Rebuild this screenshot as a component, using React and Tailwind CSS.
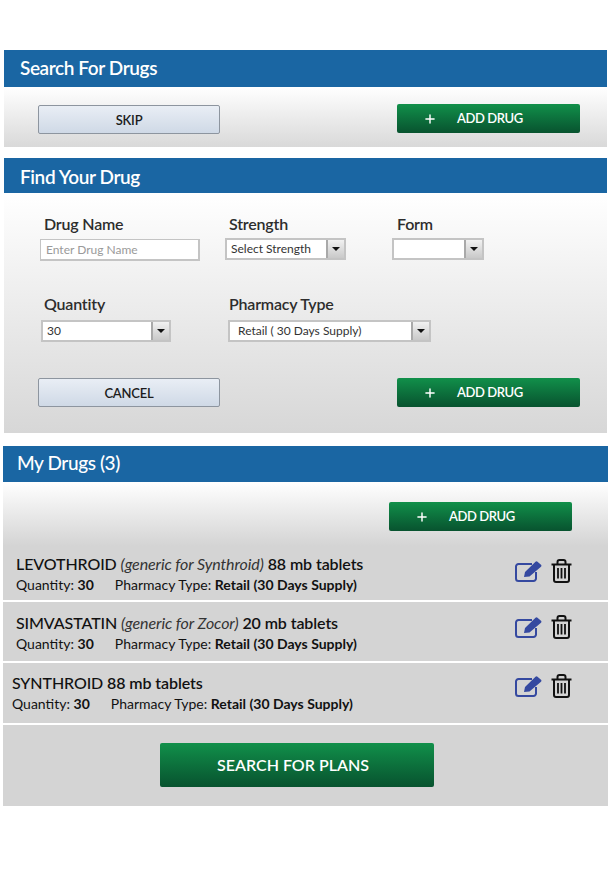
import { Plus } from "lucide-react";

const drugs = [
  { name: "LEVOTHROID", generic: "(generic for Synthroid)", dose: "88 mb tablets", pad: "pl-[13px]", height: "h-[54px]", top: "pt-[8px]", iconTop: "pt-[13px]" },
  { name: "SIMVASTATIN", generic: "(generic for Zocor)", dose: "20 mb tablets", pad: "pl-[13px]", height: "h-[59px]", top: "pt-[11px]", iconTop: "pt-[13px]" },
  { name: "SYNTHROID", generic: "", dose: "88 mb tablets", pad: "pl-[9px]", height: "h-[60px]", top: "pt-[10px]", iconTop: "pt-[11px]" },
];

const Header = ({ title, className }) => (
  <div className={`bg-[#1a66a3] flex items-center text-white text-[19px] tracking-[-0.4px] ${className}`}>{title}</div>
);

const GreenButton = ({ className }) => (
  <button className={`w-[183px] h-[29px] rounded-[2px] bg-gradient-to-b from-[#11904a] to-[#08532f] text-white text-[13px] font-semibold flex items-center pl-[26px] ${className || ""}`}>
    <Plus size={14} strokeWidth={2.5} />
    <span className="ml-[20px] mt-px tracking-[-0.4px]">ADD DRUG</span>
  </button>
);

const GreyButton = ({ label }) => (
  <button className="w-[182px] h-[29px] pt-[2px] rounded-[2px] border border-[#8d959f] bg-gradient-to-b from-[#e9eef5] to-[#cfd9e6] text-[#1c1c1c] text-[13px] font-semibold tracking-[-0.2px]">
    {label}
  </button>
);

const SelectBox = ({ value, className, textClass }) => (
  <div className={`h-[22px] flex border-2 border-[#c4c4c4] bg-white ${className}`}>
    <span className={`flex-1 text-[12px] leading-[18px] text-[#333] ${textClass || "pl-[4px]"}`}>{value}</span>
    <span className="w-[18px] bg-gradient-to-b from-[#f1f1f1] to-[#c9c9c9] border-l-2 border-[#a9a9a9] flex items-center justify-center">
      <span className="w-0 h-0 border-l-[4px] border-r-[4px] border-t-[4px] border-l-transparent border-r-transparent border-t-[#111]" />
    </span>
  </div>
);

const Label = ({ children }) => <div className="text-[16px] font-semibold tracking-[-0.2px] text-[#2d2d2d] leading-[20px]">{children}</div>;

const EditIcon = () => (
  <svg width="28" height="21" viewBox="0 0 28 21" fill="none">
    <path d="M21 11v6.500a2.500 2.500 0 0 1-2.500 2.500H3.500A2.500 2.500 0 0 1 1 17.500V5.500A2.500 2.500 0 0 1 3.500 3H17" stroke="#3549a0" strokeWidth="2" />
    <path d="M9 16l1-5L20.500 0.800a1.500 1.500 0 0 1 2 0l3.500 3a1.500 1.500 0 0 1 0 2L14.500 15.500z" fill="#3549a0" />
  </svg>
);

const TrashIcon = () => (
  <svg width="21" height="24" viewBox="0 0 21 24" fill="none" stroke="#111" strokeWidth="2">
    <path d="M0.500 5.500h20" />
    <path d="M6.500 5.500V3a2 2 0 0 1 2-2h4a2 2 0 0 1 2 2v2.500" />
    <path d="M3 5.500v15.500a2 2 0 0 0 2 2h11a2 2 0 0 0 2-2V5.500" />
    <path d="M7 9v10.500M10.500 9v10.500M14 9v10.500" strokeWidth="1.800" />
  </svg>
);

const DrugRow = ({ drug }) => (
  <div className={`flex bg-[#d4d4d4] mb-[2px] ${drug.pad} ${drug.height}`}>
    <div className={`flex-1 text-[#111] ${drug.top}`}>
      <div className="text-[16px] leading-[20px] font-medium tracking-[-0.1px]">
        {drug.name} {drug.generic && <i className="font-normal text-[#333]">{drug.generic}</i>}{" "}
        <span className="font-semibold">{drug.dose}</span>
      </div>
      <div className="text-[14px] leading-[18px] mt-[2px]">
        <span>Quantity: </span>
        <span className="font-bold">30</span>
        <span className="ml-[21px]">Pharmacy Type: </span>
        <span className="font-bold">Retail (30 Days Supply)</span>
      </div>
    </div>
    <div className={`flex items-start gap-[8px] pr-[36px] ${drug.iconTop}`}>
      <div className="mt-[2px]"><EditIcon /></div>
      <TrashIcon />
    </div>
  </div>
);

export default function App() {
  return (
    <div className="w-[612px] h-[872px] bg-white pt-[50px] font-['Lato',sans-serif] overflow-hidden">
      <section className="ml-[4px] w-[603px]">
        <Header title="Search For Drugs" className="h-[37px] pl-[16px] font-semibold" />
        <div className="h-[60px] bg-gradient-to-b from-white to-[#d9d9d9] flex justify-between pl-[34px] pr-[27px] pt-[18px]">
          <GreyButton label="SKIP" />
          <GreenButton className="-mt-px" />
        </div>
      </section>

      <section className="ml-[4px] w-[603px] mt-[11px]">
        <Header title="Find Your Drug" className="h-[35px] pl-[16px] pt-[3px] font-semibold" />
        <div className="h-[240px] bg-gradient-to-b from-white to-[#d7d7d7] pt-[21px]">
          <div className="flex h-[60px]">
            <div className="w-[221px] pl-[36px]">
              <div className="pl-[4px]"><Label>Drug Name</Label></div>
              <div className="mt-[5px] w-[160px] h-[22px] border-2 border-[#c4c4c4] border-t border-l bg-white text-[12px] leading-[19px] pl-[5px] text-[#9a9a9a]">Enter Drug Name</div>
            </div>
            <div className="w-[167px]">
              <div className="pl-[4px]"><Label>Strength</Label></div>
              <SelectBox value="Select Strength" className="w-[121px] mt-[4px]" />
            </div>
            <div>
              <div className="pl-[5px]"><Label>Form</Label></div>
              <SelectBox value="" className="w-[92px] mt-[4px]" />
            </div>
          </div>
          <div className="flex mt-[20px] h-[62px]">
            <div className="w-[224px] pl-[37px]">
              <div className="pl-[3px]"><Label>Quantity</Label></div>
              <SelectBox value="30" className="w-[130px] mt-[6px]" />
            </div>
            <div>
              <div className="pl-px"><Label>Pharmacy Type</Label></div>
              <SelectBox value="Retail ( 30 Days Supply)" className="w-[203px] mt-[6px]" textClass="pl-[8px]" />
            </div>
          </div>
          <div className="flex justify-between pl-[34px] pr-[27px] mt-[22px]">
            <GreyButton label="CANCEL" />
            <GreenButton />
          </div>
        </div>
      </section>

      <section className="ml-[3px] w-[605px] mt-[13px]">
        <Header title="My Drugs (3)" className="h-[36px] pl-[14px] pb-[2px] font-medium" />
        <div className="h-[64px] bg-gradient-to-b from-white to-[#d4d4d4] flex justify-end pr-[36px] pt-[20px]">
          <GreenButton />
        </div>
        {drugs.map((drug) => (
          <DrugRow key={drug.name} drug={drug} />
        ))}
        <div className="h-[81px] bg-[#d4d4d4] flex justify-center pt-[18px] pr-[17px]">
          <button className="w-[274px] h-[44px] rounded-[2px] bg-gradient-to-b from-[#11904a] to-[#08532f] text-white text-[16px] font-semibold pr-[8px]">
            SEARCH FOR PLANS
          </button>
        </div>
      </section>
    </div>
  );
}
